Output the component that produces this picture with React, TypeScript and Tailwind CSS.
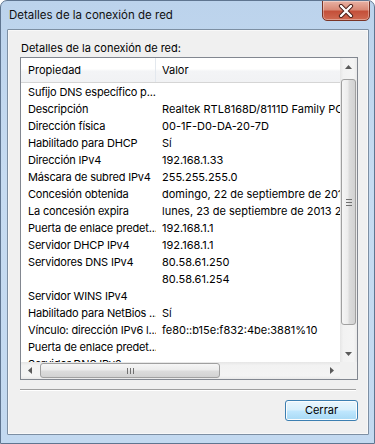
import React from "react";

const rows: [string, string][] = [
  ["Sufijo DNS específico p...", ""],
  ["Descripción", "Realtek RTL8168D/8111D Family PCI-E Gigabit Ethernet NIC (NDIS 6.20)"],
  ["Dirección física", "00-1F-D0-DA-20-7D"],
  ["Habilitado para DHCP", "Sí"],
  ["Dirección IPv4", "192.168.1.33"],
  ["Máscara de subred IPv4", "255.255.255.0"],
  ["Concesión obtenida", "domingo, 22 de septiembre de 2013 21:35:12"],
  ["La concesión expira", "lunes, 23 de septiembre de 2013 22:35:12"],
  ["Puerta de enlace predet...", "192.168.1.1"],
  ["Servidor DHCP IPv4", "192.168.1.1"],
  ["Servidores DNS IPv4", "80.58.61.250"],
  ["", "80.58.61.254"],
  ["Servidor WINS IPv4", ""],
  ["Habilitado para NetBios ...", "Sí"],
  ["Vínculo: dirección IPv6 l...", "fe80::b15e:f832:4be:3881%10"],
  ["Puerta de enlace predet...", ""],
  ["Servidor DNS IPv6", ""],
];

function Arrow({ dir }: { dir: "up" | "down" | "left" | "right" }) {
  const pts =
    dir === "up"
      ? "0,4 3.5,0 7,4"
      : dir === "down"
      ? "0,0 3.5,4 7,0"
      : dir === "left"
      ? "4,0 0,3.5 4,7"
      : "0,0 4,3.5 0,7";
  const w = dir === "up" || dir === "down" ? 7 : 4;
  const h = dir === "up" || dir === "down" ? 4 : 7;
  return (
    <svg width={w} height={h} viewBox={`0 0 ${w} ${h}`}>
      <polygon points={pts} fill="#5a5a5a" />
    </svg>
  );
}

export default function App() {
  return (
    <div
      className="relative w-[375px] h-[444px] overflow-hidden rounded-t-[7px] border border-[#5f7590] bg-[linear-gradient(180deg,#bcd3ec_0%,#c6dbf1_40%,#c3d9f0_100%)]"
      style={{ fontFamily: 'Inter, "Noto Sans", "Liberation Sans", sans-serif' }}
    >
      {/* title bar */}
      <div className="h-[28px] flex items-center pl-[8px] pt-[2px] text-[11.5px] text-[#111]">
        Detalles de la conexión de red
      </div>
      {/* close button */}
      <div className="absolute left-[321px] top-[-1px] w-[48px] h-[21px] rounded-b-[5px] border border-[#7a3426] bg-[linear-gradient(180deg,#e8b2a4_0%,#d98a77_45%,#c4503a_55%,#cf6a52_100%)] flex items-center justify-center shadow-[inset_0_0_0_1px_rgba(255,255,255,0.35)]">
        <svg width="16" height="14" viewBox="0 0 16 14">
          <path d="M3 2 L13 12 M13 2 L3 12" stroke="#4a1e18" strokeWidth="4.2" strokeLinecap="round" />
          <path d="M3 2 L13 12 M13 2 L3 12" stroke="#ffffff" strokeWidth="2.4" strokeLinecap="round" />
        </svg>
      </div>

      {/* client area */}
      <div className="absolute left-[6px] top-[28px] w-[362px] h-[406px] border border-[#7d8fa3] rounded-[1px]">
        <div className="w-full h-full bg-[#f0f0f0] border border-[#ffffff80] flex flex-col text-[11px] text-black">
          <div className="ml-[12px] mt-[10px] h-[15px] leading-[15px]">Detalles de la conexión de red:</div>
          {/* listview */}
          <div className="ml-[11px] mt-[1px] w-[338px] h-[323px] border border-[#828790] bg-white flex">
            <div className="w-[319px] flex flex-col">
              <div className="h-[304px] overflow-hidden bg-white">
                {/* header */}
                <div className="h-[25px] flex border-b border-[#d5d5d5] bg-[linear-gradient(180deg,#ffffff_0%,#ffffff_45%,#f3f4f6_55%,#f1f2f4_100%)]">
                  <div className="w-[135px] shrink-0 pl-[7px] pt-[1px] flex items-center border-r border-[#e3e8ee]">Propiedad</div>
                  <div className="pl-[6px] pt-[1px] flex items-center whitespace-nowrap">Valor</div>
                </div>
                {rows.map((r, i) => (
                  <div key={i} className="h-[17px] pt-[1px] flex items-center whitespace-nowrap leading-[16px]">
                    <div className="w-[135px] shrink-0 pl-[7px] overflow-hidden tracking-[-0.18px]">{r[0]}</div>
                    <div className="pl-[6px]">{r[1]}</div>
                  </div>
                ))}
              </div>
              {/* horizontal scrollbar */}
              <div className="h-[17px] flex bg-[linear-gradient(180deg,#e6e6e6_0%,#f2f2f2_20%,#f4f4f4_80%,#e9e9e9_100%)]">
                <div className="w-[17px] h-[17px] flex items-center justify-center">
                  <Arrow dir="left" />
                </div>
                <div className="flex-1 flex items-center">
                  <div className="ml-[2px] w-[180px] h-[15px] rounded-[3px] border border-[#a0a0a0] bg-[linear-gradient(180deg,#f6f6f6_0%,#ececec_45%,#dcdcdc_55%,#d2d2d2_100%)] flex items-center justify-center gap-[2px]">
                    <div className="w-px h-[6px] bg-[#707070]" />
                    <div className="w-px h-[6px] bg-[#707070]" />
                    <div className="w-px h-[6px] bg-[#707070]" />
                  </div>
                </div>
                <div className="w-[17px] h-[17px] flex items-center justify-center">
                  <Arrow dir="right" />
                </div>
              </div>
            </div>
            {/* vertical scrollbar */}
            <div className="w-[17px] flex flex-col">
              <div className="h-[304px] flex flex-col bg-[linear-gradient(90deg,#e6e6e6_0%,#f2f2f2_20%,#f4f4f4_80%,#e9e9e9_100%)]">
                <div className="h-[17px] flex items-center justify-center">
                  <Arrow dir="up" />
                </div>
                <div className="flex-1 flex justify-center">
                  <div className="mt-[4px] w-[15px] h-[246px] rounded-[3px] border border-[#a0a0a0] bg-[linear-gradient(90deg,#f6f6f6_0%,#ececec_45%,#dcdcdc_55%,#d2d2d2_100%)] flex flex-col items-center justify-center gap-[2px]">
                    <div className="h-px w-[6px] bg-[#707070]" />
                    <div className="h-px w-[6px] bg-[#707070]" />
                    <div className="h-px w-[6px] bg-[#707070]" />
                  </div>
                </div>
                <div className="h-[17px] flex items-center justify-center">
                  <Arrow dir="down" />
                </div>
              </div>
              <div className="h-[17px] bg-[#f0f0f0]" />
            </div>
          </div>
          {/* separator */}
          <div className="ml-[11px] mt-[9px] w-[336px] border-t border-[#a0a0a0] border-b border-b-white" />
          {/* button */}
          <div className="flex justify-end mr-[9px] mt-[9px]">
            <div className="w-[73px] h-[21px] rounded-[3px] border border-[#3c7fb1] bg-[linear-gradient(180deg,#eaf6fd_0%,#d9f0fc_45%,#bee6fd_55%,#a7d9f5_100%)] shadow-[inset_0_0_0_1px_#fcfcfc] flex items-center justify-center">
              Cerrar
            </div>
          </div>
        </div>
      </div>
    </div>
  );
}
